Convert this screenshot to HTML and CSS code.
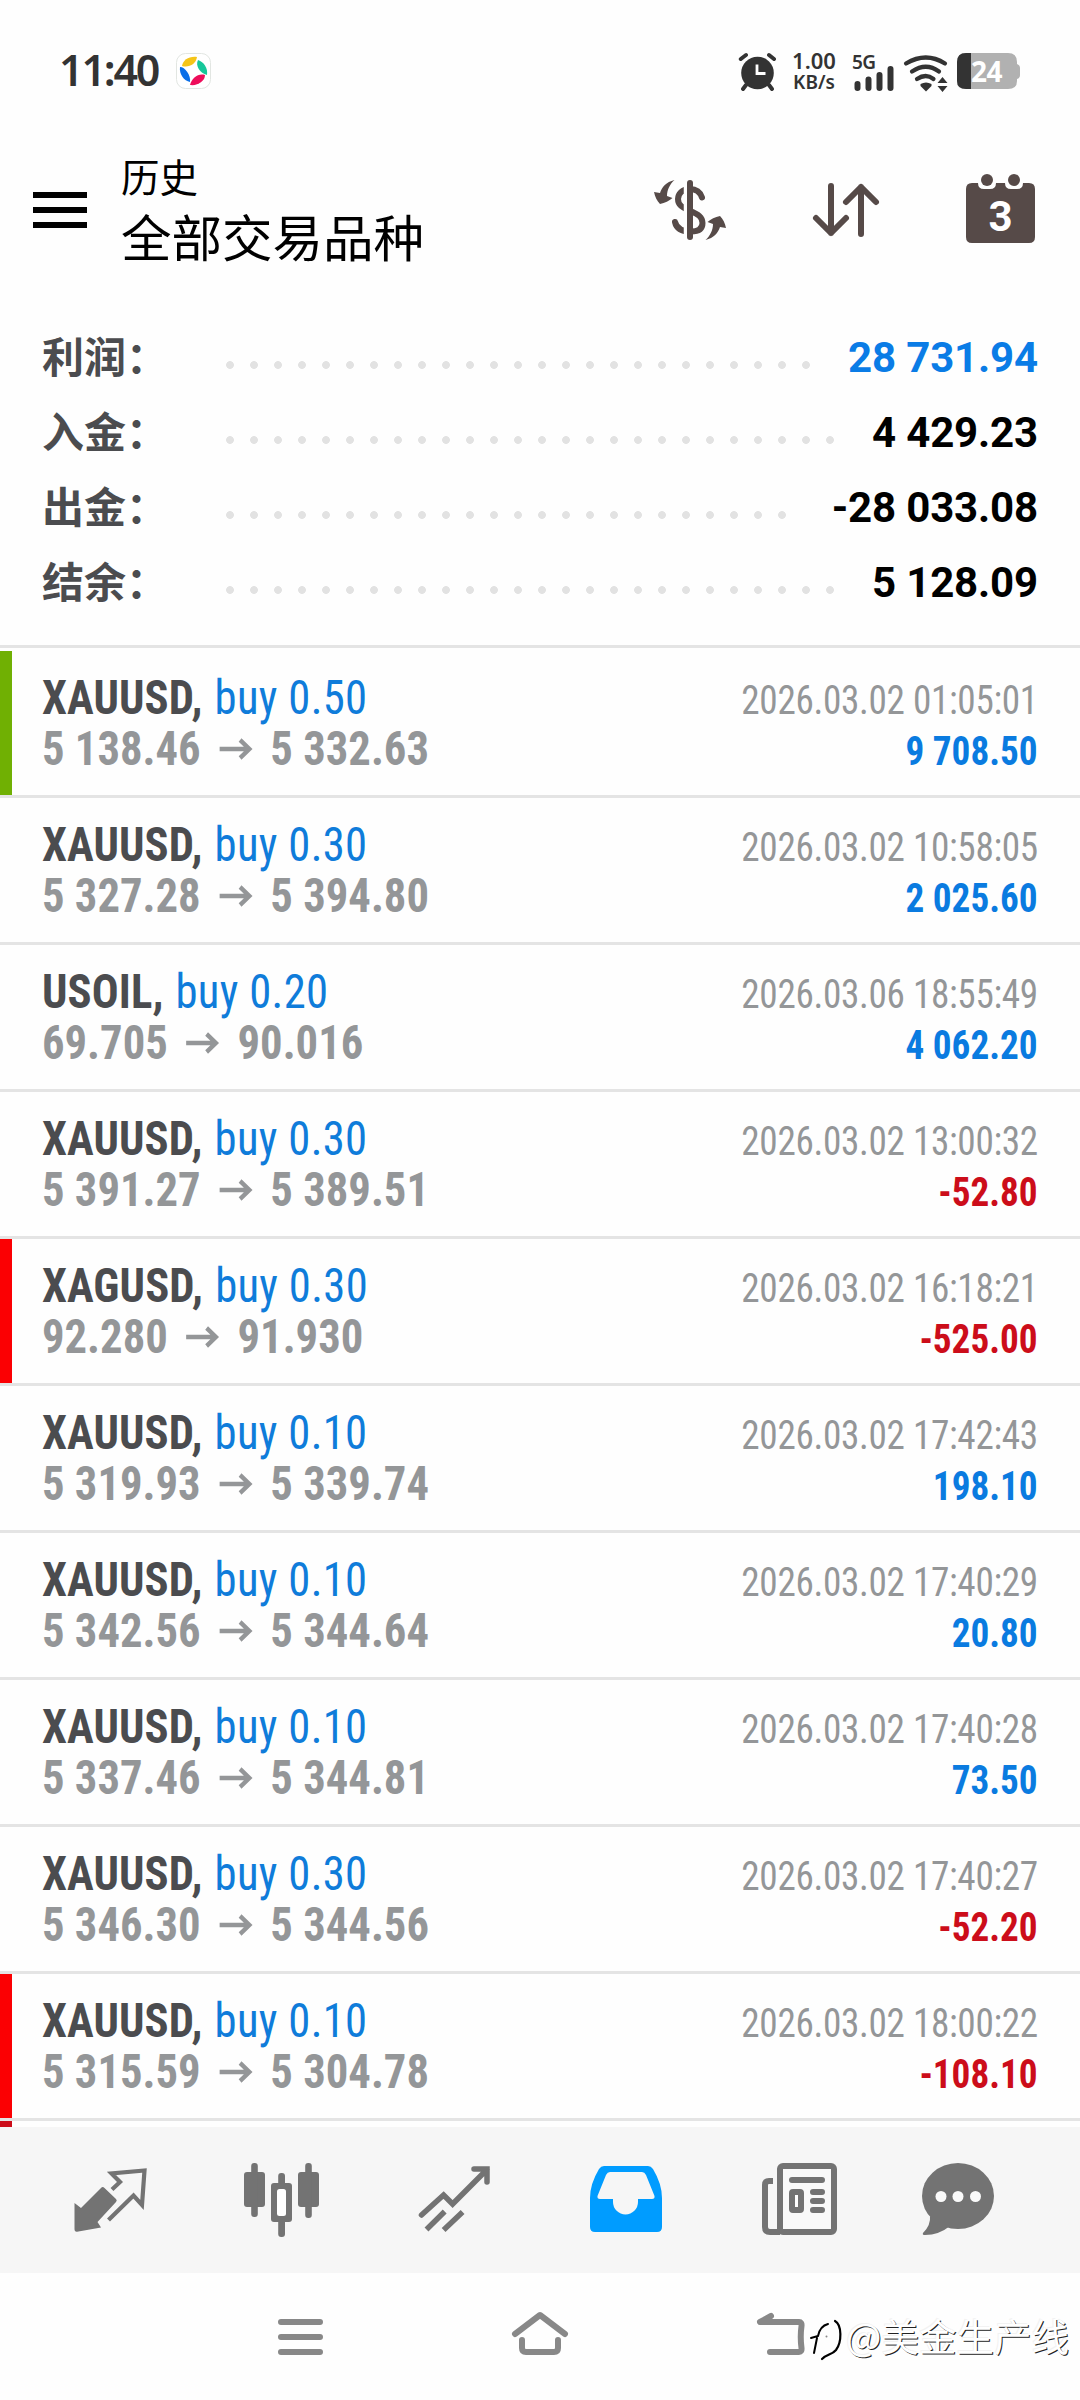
FILE: index.html
```html
<!DOCTYPE html>
<html lang="zh-CN">
<head>
<meta charset="utf-8">
<title>历史</title>
<link rel="stylesheet" href="styles.css">
</head>
<body>
<div class="statusbar">
  <span class="clock">11:40</span>
  <svg class="app-badge" width="36" height="36" viewBox="0 0 36 36"><rect x=".5" y=".5" width="34" height="35" rx="9" fill="#fff" stroke="#e2e6e2"/><path d="M6 13C7 7 13 3 21 4C20 11 13 15 6 13Z" fill="#f5c518"/><path d="M22 7C28 9 32 15 31 22C24 20 19 13 22 7Z" fill="#17c79a"/><path d="M4 14C9 14 15 22 14 29C8 28 3 21 4 14Z" fill="#0a6fe8"/><path d="M14 32C16 25 22 20 29 22C29 28 22 33 14 32Z" fill="#ee0d5a"/></svg>
  <div class="indicators">
    <svg class="alarm" width="37" height="38" viewBox="0 0 37 38"><circle cx="18.5" cy="20" r="16.3" fill="#333"/><path d="M1.8 6L7 2M30 2L35 6M7 32L4 36M30 32L33 36" stroke="#333" stroke-width="4" stroke-linecap="round"/><path d="M18 11.5V20.500H26.500" fill="none" stroke="#fff" stroke-width="2.800"/></svg>
    <div class="speed"><span class="speed-value">1.00</span><span class="speed-unit">KB/s</span></div>
    <div class="signal"><span>5G</span><svg width="42" height="25" viewBox="0 0 42 25"><path d="M6 18V22M17 13.500V22M28 9V22M39 3V22" transform="translate(-.5 0)" stroke="#333" stroke-width="6" stroke-linecap="round"/></svg></div>
    <svg class="wifi" width="44" height="37" viewBox="0 0 44 37"><g fill="none" stroke="#333" stroke-width="4.200" stroke-linecap="round"><path d="M2 8.500Q22-3.500 41 8.500M8 16.500Q22 7 35 16.500M13 24Q22 18 29.500 24"/></g><path d="M16.500 29Q22 26 27.500 29V31L22 36.500L16.500 31Z" fill="#333"/><path d="M33.500 28L38.500 22L43.500 28ZM33.500 31H43.500L38.500 37Z" fill="#333"/></svg>
    <svg class="battery" width="64" height="37" viewBox="0 0 64 37"><path d="M9 0H51Q60 0 60 9V11Q63 12 63 15V22Q63 25 60 26V28Q60 36 51 36H9Q0 36 0 28V9Q0 0 9 0Z" fill="#b1b1b1"/><path d="M14 0H9Q0 0 0 9V28Q0 36 9 36H14Z" fill="#333"/><text x="29.500" y="28.500" class="battery-level">24</text></svg>
  </div>
</div>

<header class="appbar">
  <svg class="menu" width="54" height="36" viewBox="0 0 54 36"><path d="M0 3H54M0 18H54M0 33H54" stroke="#000" stroke-width="6"/></svg>
  <div class="titles"><span class="subtitle">历史</span><h1 class="title">全部交易品种</h1></div>
  <div class="actions">
    <svg width="72" height="60" viewBox="0 0 72 60"><g fill="#564a48"><path id="turn" d="M20.500 0C12 2 8 7 6 13L0 12C1 17 3 21 6 24C11 23 15 21 18.500 18L13 16C13 10 16 4 20.500 0Z"/><use href="#turn" transform="rotate(180 36 30)"/></g><path d="M48 17.500C46 11.500 42 9 36 9C28 9 24 14 24 19C24 26 30 28 36 31C44 34 48.500 37 48.500 43C48.500 49 44 51.500 37 51.500C28 51.500 22.500 49 21 42" fill="none" stroke="#564a48" stroke-width="6" stroke-linecap="round"/><path d="M31.500 2V60" stroke="#fff" stroke-width="3.500"/><path d="M36 3V57" stroke="#564a48" stroke-width="6" stroke-linecap="round"/></svg>
    <svg class="sort" width="66" height="54" viewBox="0 0 66 54"><path d="M18 3V50M3 35L18 50L33 35M48 51V4M33 19L48 4L63 19" fill="none" stroke="#564a48" stroke-width="6" stroke-linecap="round" stroke-linejoin="round"/></svg>
    <svg class="calendar" width="69" height="69" viewBox="0 0 69 69"><path d="M6 9H12Q12 15 18 15H24Q30 15 30 9H39Q39 15 45 15H51Q57 15 57 9H63Q69 9 69 15V63Q69 69 63 69H6Q0 69 0 63V15Q0 9 6 9Z" fill="#564a48"/><circle cx="21" cy="6" r="6" fill="#564a48"/><circle cx="48" cy="6" r="6" fill="#564a48"/><text x="34.500" y="56.500" class="calendar-day">3</text></svg>
  </div>
</header>

<section class="summary">
  <div class="total"><span class="label">利润：</span><i class="leader"></i><b class="value up">28 731.94</b></div>
  <div class="total"><span class="label">入金：</span><i class="leader"></i><b class="value">4 429.23</b></div>
  <div class="total"><span class="label">出金：</span><i class="leader"></i><b class="value">-28 033.08</b></div>
  <div class="total"><span class="label">结余：</span><i class="leader"></i><b class="value">5 128.09</b></div>
</section>

<svg class="defs" width="0" height="0"><symbol id="arrow" viewBox="0 0 36 22"><path d="M0 11H32M22 2L32 11L22 20" fill="none" stroke="#949698" stroke-width="4.500"/></symbol></svg>
<main class="deals">
  <article class="deal tp"><div class="left"><p class="order"><b>XAUUSD,</b><span>buy 0.50</span></p><p class="prices">5 138.46<svg><use href="#arrow"/></svg>5 332.63</p></div><div class="right"><time>2026.03.02 01:05:01</time><b class="up">9 708.50</b></div></article>
  <article class="deal"><div class="left"><p class="order"><b>XAUUSD,</b><span>buy 0.30</span></p><p class="prices">5 327.28<svg><use href="#arrow"/></svg>5 394.80</p></div><div class="right"><time>2026.03.02 10:58:05</time><b class="up">2 025.60</b></div></article>
  <article class="deal"><div class="left"><p class="order"><b>USOIL,</b><span>buy 0.20</span></p><p class="prices">69.705<svg><use href="#arrow"/></svg>90.016</p></div><div class="right"><time>2026.03.06 18:55:49</time><b class="up">4 062.20</b></div></article>
  <article class="deal"><div class="left"><p class="order"><b>XAUUSD,</b><span>buy 0.30</span></p><p class="prices">5 391.27<svg><use href="#arrow"/></svg>5 389.51</p></div><div class="right"><time>2026.03.02 13:00:32</time><b class="down">-52.80</b></div></article>
  <article class="deal sl"><div class="left"><p class="order"><b>XAGUSD,</b><span>buy 0.30</span></p><p class="prices">92.280<svg><use href="#arrow"/></svg>91.930</p></div><div class="right"><time>2026.03.02 16:18:21</time><b class="down">-525.00</b></div></article>
  <article class="deal"><div class="left"><p class="order"><b>XAUUSD,</b><span>buy 0.10</span></p><p class="prices">5 319.93<svg><use href="#arrow"/></svg>5 339.74</p></div><div class="right"><time>2026.03.02 17:42:43</time><b class="up">198.10</b></div></article>
  <article class="deal"><div class="left"><p class="order"><b>XAUUSD,</b><span>buy 0.10</span></p><p class="prices">5 342.56<svg><use href="#arrow"/></svg>5 344.64</p></div><div class="right"><time>2026.03.02 17:40:29</time><b class="up">20.80</b></div></article>
  <article class="deal"><div class="left"><p class="order"><b>XAUUSD,</b><span>buy 0.10</span></p><p class="prices">5 337.46<svg><use href="#arrow"/></svg>5 344.81</p></div><div class="right"><time>2026.03.02 17:40:28</time><b class="up">73.50</b></div></article>
  <article class="deal"><div class="left"><p class="order"><b>XAUUSD,</b><span>buy 0.30</span></p><p class="prices">5 346.30<svg><use href="#arrow"/></svg>5 344.56</p></div><div class="right"><time>2026.03.02 17:40:27</time><b class="down">-52.20</b></div></article>
  <article class="deal sl"><div class="left"><p class="order"><b>XAUUSD,</b><span>buy 0.10</span></p><p class="prices">5 315.59<svg><use href="#arrow"/></svg>5 304.78</p></div><div class="right"><time>2026.03.02 18:00:22</time><b class="down">-108.10</b></div></article>
  <div class="next-deal"></div>
</main>

<nav class="tabs">
  <svg width="72" height="78" viewBox="0 0 72 78"><path d="M.5 43L7 48L27 28Q28.600 26 30.500 28L42 39Q43.500 40.500 42 42L23.500 62L27 67.500L3 71.700Q.5 72 .5 69Z" fill="#737373"/><path d="M38 29.500L46 22L37.500 13.500L70.500 10.500L68 45L59.500 35.500L34.500 60" fill="none" stroke="#737373" stroke-width="4.200"/></svg>
  <svg width="75" height="78" viewBox="0 0 75 78"><g fill="#737373"><rect y="12" width="21" height="35" rx="3"/><rect x="7.200" y="3" width="6.600" height="54" rx="3"/><rect x="54" y="12" width="21" height="35" rx="3"/><rect x="61.200" y="3" width="6.600" height="55" rx="3"/><rect x="27" y="23" width="21" height="39" rx="3"/><rect x="34.200" y="13" width="6.800" height="64" rx="3"/></g><rect x="33" y="29" width="9" height="27" rx="2.500" fill="#fff"/></svg>
  <svg width="72" height="78" viewBox="0 0 72 78"><path d="M2.500 55L24.600 35L33.600 44L68 9.500M55 9H68V22" fill="none" stroke="#737373" stroke-width="5.500" stroke-linecap="round"/><path d="M25.700 51.500L7.500 69.500M43.600 52L24.600 70" stroke="#737373" stroke-width="5.500"/></svg>
  <svg width="72" height="78" viewBox="0 0 72 78"><path fill-rule="evenodd" d="M14 6H58Q61 6 63 9Q72 24 72 38V67Q72 72 67 72H5Q0 72 0 67V38Q0 24 9 9Q11 6 14 6ZM20 12Q17.500 12 16 15L7.500 36Q7 39 10 39H23V42A12.500 12.500 0 0 0 48 42V39H62Q65 39 64.500 36L56 15Q54.500 12 52 12Z" fill="#009cff"/></svg>
  <svg width="75" height="78" viewBox="0 0 75 78"><rect x="18" y="6" width="54" height="66" rx="3" fill="#f9f9f9" stroke="#737373" stroke-width="6"/><path d="M11 21H7Q3 21 3 25V67Q3 72 8 72H18" fill="none" stroke="#737373" stroke-width="6"/><path d="M30 20H60M51 32H60M51 41H60M51 50H60" stroke="#737373" stroke-width="6" stroke-linecap="round"/><rect x="30" y="32" width="9" height="18" rx="1" fill="#fff" stroke="#737373" stroke-width="6"/></svg>
  <svg class="chat" width="72" height="78" viewBox="0 0 72 78"><ellipse cx="36" cy="36" rx="36" ry="33" fill="#737373"/><path d="M8 56Q9 65 1 73Q0 75 3 75Q17 75 28 66Z" fill="#737373"/><g fill="#fafafa"><circle cx="19" cy="36.500" r="5.500"/><circle cx="36" cy="36.500" r="5.500"/><circle cx="53.500" cy="36.500" r="5.500"/></g></svg>
</nav>

<footer class="sysnav">
  <svg width="45" height="44" viewBox="0 0 45 44"><path d="M3 10H42M3 25H42M3 40H42" stroke="#888" stroke-width="6" stroke-linecap="round"/></svg>
  <svg width="56" height="44" viewBox="0 0 56 44"><path d="M3 22L28 3L53 22M10 28V36Q10 40 14 40H42Q46 40 46 36V28" fill="none" stroke="#888" stroke-width="6" stroke-linecap="round" stroke-linejoin="round"/></svg>
  <svg width="48" height="44" viewBox="0 0 48 44"><path d="M14 4L3 10H42Q45 10 44.500 14Q43 25 44.500 36Q45 40 42 40H13" fill="none" stroke="#888" stroke-width="6" stroke-linecap="round" stroke-linejoin="round"/></svg>
  <div class="watermark">
    <svg width="34" height="42" viewBox="0 0 34 42"><g fill="none" stroke="#000" stroke-linecap="round"><path d="M4 35L7 20M1 20L8 18Q10 8 18 6" stroke-width="2"/><path d="M25 3C32 7 32 24 26 32C22 37 17 36 12 41" stroke-width="2.200"/></g><circle cx="16.500" cy="18.500" r="1" fill="#888"/></svg>
    <span>@美金生产线</span>
  </div>
</footer>
</body>
</html>
```
FILE: styles.css
```css
* { box-sizing: border-box; margin: 0; padding: 0; }
body {
  width: 1080px;
  height: 2400px;
  overflow: hidden;
  display: flex;
  flex-direction: column;
  background: #fefefe;
  color: #000;
  font-family: Roboto, "Noto Sans CJK SC", sans-serif;
}
svg { display: block; flex: none; overflow: visible; }
.defs { position: absolute; }

.statusbar {
  height: 108px;
  padding: 35px 59px 0 59px;
  display: flex;
  align-items: flex-start;
  color: #333;
  font-family: "Noto Sans", sans-serif;
  font-weight: 600;
}
.clock { width: 117px; font-size: 43px; line-height: 70px; letter-spacing: -2.2px; }
.app-badge { margin-top: 18px; }
.indicators { margin-left: auto; height: 37px; margin-top: 18px; display: flex; align-items: flex-start; }
.speed { width: 46px; margin-left: 15px; display: flex; flex-direction: column; text-align: center; }
.speed-value { font-size: 22px; line-height: 14px; }
.speed-unit { font-size: 19px; line-height: 22px; margin-top: 4px; }
.signal { width: 42px; margin-left: 15px; display: flex; flex-direction: column; }
.signal span { font-size: 19px; line-height: 16px; height: 12px; margin-top: 1px; letter-spacing: -.5px; }
.wifi { margin-left: 10px; margin-top: 2px; }
.battery { margin-left: 9px; }
.battery-level { font: 700 28px "Noto Sans", sans-serif; letter-spacing: -.5px; fill: #fff; text-anchor: middle; }

.appbar { height: 212px; display: flex; padding: 0 45px 0 33px; }
.menu { margin-top: 84px; }
.titles { margin-left: 34px; padding-top: 39px; display: flex; flex-direction: column; font-family: "Noto Sans CJK SC", sans-serif; }
.subtitle { font-size: 38.500px; line-height: 56px; }
.title { font-size: 50.500px; line-height: 64px; font-weight: 400; }
.actions { margin-left: auto; display: flex; gap: 87px; padding-top: 72px; }
.sort { margin-top: 3px; }
.calendar { margin-top: -6px; }
.calendar-day { font: 700 42px Roboto, sans-serif; fill: #fff; text-anchor: middle; }

.summary { padding: 0 42px 25px; border-bottom: 3px solid #e4e4e4; height: 328px; }
.total { height: 75px; display: flex; align-items: center; }
.label { width: 176px; font: 700 42px/68px "Noto Sans CJK SC", sans-serif; color: #4b4c4f; margin-top: -6px; }
.leader {
  flex: 1;
  height: 8px;
  margin: 15px 32px 0 0;
  background: radial-gradient(circle, #e2e2e2 3.500px, transparent 4.300px) 0 0 / 24px 8px repeat-x;
}
.value { font-size: 42px; line-height: 75px; font-weight: 700; letter-spacing: -.15px; }
.up { color: #0a7be0; }
.down { color: #cc0d1a; }
.value.up { color: #0a7ce6; }

.deals { height: 1479px; padding-top: 3px; overflow: hidden; font-family: "Roboto Condensed", Roboto, sans-serif; }
.deal {
  height: 147px;
  display: flex;
  justify-content: space-between;
  padding: 21px 42px 0;
  border-bottom: 3px solid #e4e4e4;
}
.deal.tp, .deal.sl { padding-left: 0; }
.deal.tp::before, .deal.sl::before { content: ""; width: 12px; margin: -21px 30px 0 0; background: #70b003; }
.deal.sl::before { background: #fb0003; }
.left { flex: 1; font-size: 48px; line-height: 51px; white-space: nowrap; transform: scaleX(.93); transform-origin: 0 0; }
.order { display: flex; gap: 13px; }
.order b { color: #4b4c4f; font-weight: 700; letter-spacing: .1px; }
.order span { color: #0f7cda; font-weight: 430; letter-spacing: .35px; }
.prices { color: #949698; font-weight: 700; display: flex; align-items: center; }
.prices svg { width: 38px; height: 22px; margin: 0 18px 0 19px; }
.right { padding-top: 3px; display: flex; flex-direction: column; align-items: flex-end; font-size: 40px; line-height: 51px; transform: scaleX(.93); transform-origin: 100% 0; }
.right time { color: #949698; letter-spacing: -.34px; margin-right: -.3px; }
.next-deal { width: 12px; height: 6px; background: #cc0d1a; }

.tabs { height: 146px; padding: 33px 0 0 74px; display: flex; gap: 99px; background: #f6f6f6; }
.tabs svg:nth-child(2) { margin: 0 1px 0 -1px; }
.tabs svg:nth-child(5) { margin-left: 1px; }
.tabs .chat { margin-left: -14px; }

.sysnav { position: relative; height: 127px; display: flex; justify-content: space-between; padding: 39px 275px 0 278px; }
.watermark { position: absolute; left: 810px; top: 45px; display: flex; align-items: flex-start; }
.watermark span {
  margin: -10px 0 0 2px;
  font: 400 37.500px/54px "Noto Sans CJK SC", sans-serif;
  color: #fff;
  white-space: nowrap;
  text-shadow: 1px 1px 0 #222, -1px -1px 0 #f2f2f2;
}
```
